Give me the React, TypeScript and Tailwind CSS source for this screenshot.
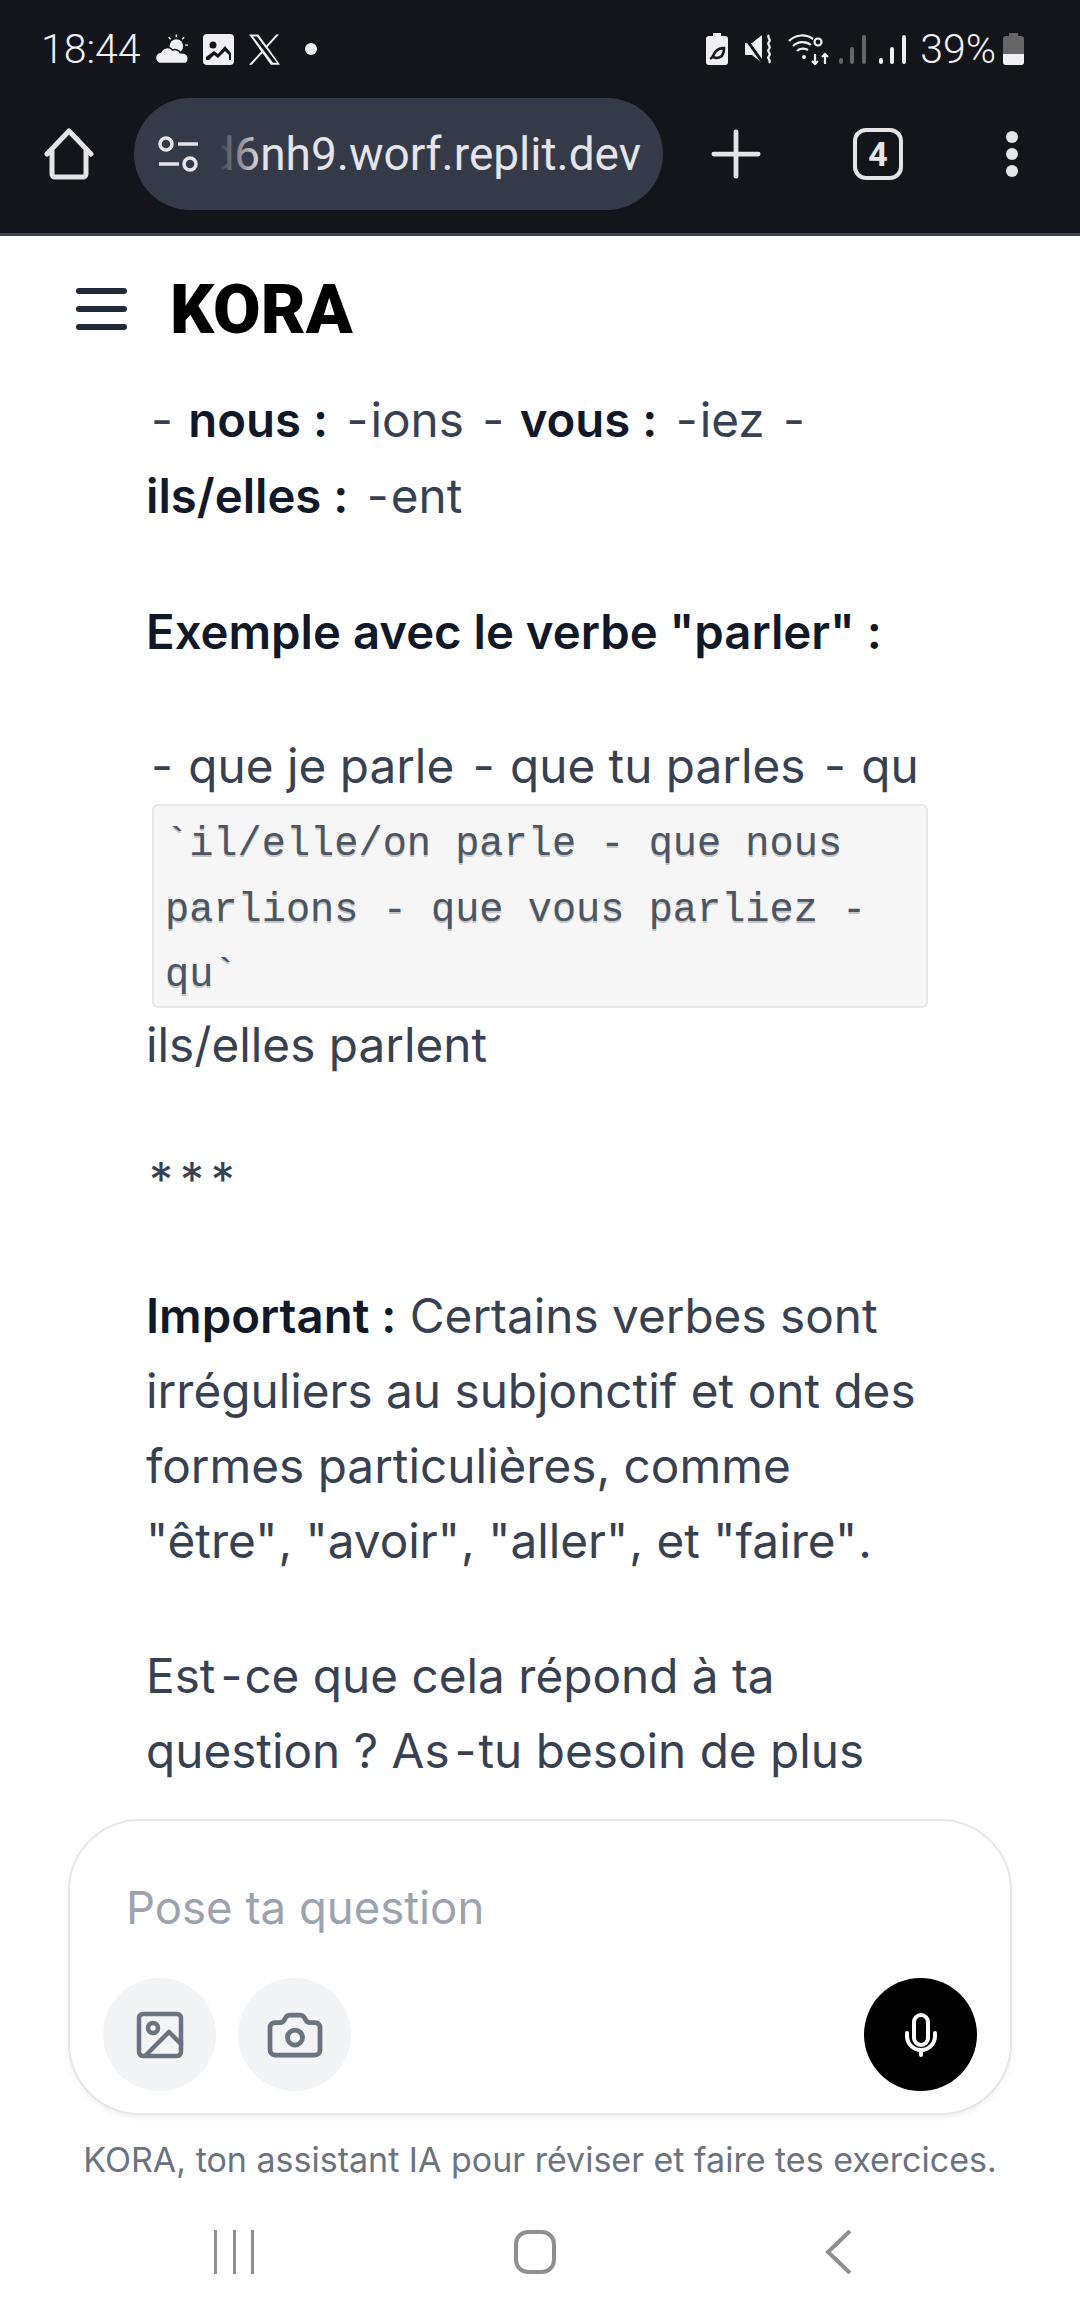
import { Camera, Plus } from "lucide-react";

const ink = "font-semibold text-[47.3px] text-[#111827]";

function Dash() {
  return <span className="ml-[5px] mr-[2px]">-</span>;
}

function Quoted({ word }: { word: string }) {
  return <span className="pr-[1px]">"{word}"</span>;
}

function StatusBar() {
  return (
    <div className="flex h-[78px] items-center justify-between pl-[41px] pr-[56px] pt-[20px] font-['Roboto',sans-serif] text-[41px] font-light leading-[50px] text-[#f0f0f2]">
      <div className="flex items-center">
        <span>18:44</span>
        <svg className="ml-[15px] h-[32px] w-[33px]" viewBox="0 0 34 32" fill="#f0f0f2">
          <circle cx="21" cy="13" r="7" />
          <path d="M6 31a6 6 0 0 1-1-12c2-5 9-6 12-2 3-1 7 0 8 3 6-1 9 3 8 7 0 3-2 4-4 4z" stroke="#13151a" strokeWidth="1.5" />
          <path d="M21 1v3M29 4l-2 2M33 12h-3M13 4l2 2" stroke="#f0f0f2" strokeWidth="1.5" />
        </svg>
        <svg className="ml-[14px] h-[31px] w-[31px]" viewBox="0 0 31 31">
          <rect width="31" height="31" rx="4" fill="#f0f0f2" />
          <circle cx="10" cy="11" r="3.5" fill="#13151a" />
          <path d="M3 26v-3l8-6 4 3 7-8 6 7v7z" fill="#13151a" />
          <path d="M6 26l5-5 4 3 7-7 4 4v5z" fill="#f0f0f2" />
        </svg>
        <svg className="ml-[14px] h-[33px] w-[33px]" viewBox="0 0 24 24" fill="#f0f0f2">
          <path d="M14.2 10.2 22.6 1h-2l-7.3 8L7.5 1H.8l8.8 12.4L.8 23h2l7.7-8.4 6.1 8.4h6.7zM3.6 2.5h2.9l14.6 19.1h-2.9z" />
        </svg>
        <span className="ml-[24px] h-[12px] w-[12px] rounded-full bg-[#f0f0f2]" />
      </div>
      <div className="flex items-center">
        <svg className="h-[32px] w-[22px]" viewBox="0 0 22 32">
          <path d="M7 0h8v3h4a3 3 0 0 1 3 3v23a3 3 0 0 1-3 3H3a3 3 0 0 1-3-3V6a3 3 0 0 1 3-3h4z" fill="#f0f0f2" />
          <path d="M4 26c4-2 3-5 6-8 2-2 6-3 8-3 0 6-2 10-8 10l-3-1" fill="none" stroke="#13151a" strokeWidth="2.5" />
        </svg>
        <svg className="ml-[16px] h-[30px] w-[29px]" viewBox="0 0 29 30" fill="#f0f0f2">
          <path d="M1 9h7l10-8v28l-10-8H1z" />
          <path d="M0 2l19 27" stroke="#13151a" strokeWidth="3" />
          <path d="M25 1c-3 3 3 4 0 7s3 4 0 7 3 4 0 7 3 4 0 7" fill="none" stroke="#f0f0f2" strokeWidth="2.2" />
        </svg>
        <svg className="ml-[15px] h-[32px] w-[42px]" viewBox="0 0 42 32" fill="none" stroke="#f0f0f2" strokeWidth="2.2">
          <path d="M1 8c7-7 17-7 24-2M5 13c5-5 13-5 18-1M9 18c3-3 8-3 11-1" />
          <circle cx="16" cy="24" r="2" fill="#f0f0f2" stroke="none" />
          <circle cx="30" cy="9" r="3.5" />
          <path d="M27 21v10M24 28l3 3 3-3M37 31v-10M34 24l3-3 3 3" />
        </svg>
        <svg className="ml-[9px] h-[30px] w-[27px]" viewBox="0 0 27 30" fill="#666">
          <rect x="0" y="24" width="4" height="6" rx="2" />
          <rect x="11" y="13" width="4" height="17" rx="2" />
          <rect x="23" y="1" width="4" height="29" rx="2" />
        </svg>
        <svg className="ml-[13px] h-[30px] w-[27px]" viewBox="0 0 27 30" fill="#f0f0f2">
          <rect x="0" y="24" width="4" height="6" rx="2" />
          <rect x="11" y="13" width="4" height="17" rx="2" />
          <rect x="23" y="1" width="4" height="29" rx="2" />
        </svg>
        <span className="ml-[14px]">39%</span>
        <svg className="ml-[7px] h-[32px] w-[21px]" viewBox="0 0 21 32">
          <path d="M6 0h9v3h3a3 3 0 0 1 3 3v23a3 3 0 0 1-3 3H3a3 3 0 0 1-3-3V6a3 3 0 0 1 3-3h3z" fill="#666" />
          <path d="M0 21h21v8a3 3 0 0 1-3 3H3a3 3 0 0 1-3-3z" fill="#f0f0f2" />
        </svg>
      </div>
    </div>
  );
}

function Toolbar() {
  return (
    <div className="flex h-[158px] items-center border-b-[3px] border-[#43454c] pb-[3px]">
      <svg className="ml-[44px] h-[52px] w-[50px] shrink-0" viewBox="0 0 50 52" fill="none" stroke="#e4e4e9" strokeWidth="5" strokeLinejoin="round" strokeLinecap="round">
        <path d="M3 26 25 3l22 23M8 23v23a3 3 0 0 0 3 3h28a3 3 0 0 0 3-3V23" />
      </svg>
      <div className="relative ml-[40px] flex h-[112px] w-[529px] shrink-0 items-center rounded-full bg-[#343a48] pl-[23px] pr-[22px]">
        <svg className="h-[36px] w-[42px] shrink-0" viewBox="0 0 42 36" fill="none" stroke="#e4e4e9" strokeWidth="3.5">
          <circle cx="9" cy="8" r="6" />
          <path d="M21 8h20M2 28h20" />
          <circle cx="33" cy="28" r="6" />
        </svg>
        <div className="ml-[22px] flex-1 overflow-hidden whitespace-nowrap text-right font-['Roboto',sans-serif] text-[46px] leading-[60px] text-[#e4e4e9] [direction:rtl]">
          <span className="[direction:ltr] [unicode-bidi:embed]">d6nh9.worf.replit.dev</span>
        </div>
        <div className="absolute left-[84px] top-0 h-full w-[44px] bg-gradient-to-r from-[#343a48] to-transparent" />
      </div>
      <Plus className="ml-[35px] h-[76px] w-[76px] shrink-0 text-[#e4e4e9]" strokeWidth={1.5} />
      <div className="ml-[79px] flex h-[52px] w-[50px] shrink-0 items-center justify-center rounded-[13px] border-[4px] border-[#e4e4e9] font-['Roboto',sans-serif] text-[34px] font-bold text-[#e4e4e9]">
        4
      </div>
      <div className="ml-[103px] flex flex-col gap-[5px]">
        <span className="h-[12px] w-[12px] rounded-full bg-[#e4e4e9]" />
        <span className="h-[12px] w-[12px] rounded-full bg-[#e4e4e9]" />
        <span className="h-[12px] w-[12px] rounded-full bg-[#e4e4e9]" />
      </div>
    </div>
  );
}

function Composer() {
  return (
    <div className="mx-[68px] flex h-[296px] w-[944px] shrink-0 flex-col rounded-[72px] border-2 border-[#e5e7eb] bg-white px-[33px] pb-[22px] pt-[57px] shadow-[0_3px_6px_rgba(0,0,0,0.06)]">
      <div className="pl-[23px] text-[45.5px] leading-[60px] text-[#9ca3af]">Pose ta question</div>
      <div className="mt-auto flex items-center">
        <div className="flex h-[113px] w-[113px] items-center justify-center rounded-full bg-[#f3f4f6]">
          <svg className="h-[48px] w-[48px]" viewBox="0 0 48 48" fill="none" stroke="#6b7280" strokeWidth="4.5" strokeLinecap="round" strokeLinejoin="round">
            <rect x="3" y="3" width="42" height="42" rx="4" />
            <circle cx="17" cy="17" r="5" />
            <path d="M10 44 33 21l12 12" />
          </svg>
        </div>
        <div className="ml-[22px] flex h-[113px] w-[113px] items-center justify-center rounded-full bg-[#f3f4f6]">
          <Camera className="h-[60px] w-[60px] text-[#6b7280]" strokeWidth={1.9} />
        </div>
        <div className="ml-auto flex h-[113px] w-[113px] items-center justify-center rounded-full bg-black">
          <svg className="h-[44px] w-[34px]" viewBox="0 0 34 44" fill="none" stroke="#fff" strokeWidth="4" strokeLinecap="round">
            <rect x="10" y="2" width="14" height="30" rx="7" />
            <path d="M3 20v3a14 14 0 0 0 28 0v-3M17 37v5" />
          </svg>
        </div>
      </div>
    </div>
  );
}

export default function App() {
  return (
    <div className="flex h-[2316px] w-[1080px] flex-col overflow-hidden bg-white font-['Inter',sans-serif]">
      <div className="bg-[#13151a]">
        <StatusBar />
        <Toolbar />
      </div>

      <div className="flex h-[146px] shrink-0 items-center pl-[76px]">
        <div className="flex w-[51px] flex-col gap-[12px]">
          <span className="h-[6px] rounded-full bg-[#1f2937]" />
          <span className="h-[6px] rounded-full bg-[#1f2937]" />
          <span className="h-[6px] rounded-full bg-[#1f2937]" />
        </div>
        <span className="ml-[43px] font-['Roboto',sans-serif] text-[69px] font-black leading-none text-black">KORA</span>
      </div>

      <main className="min-h-0 flex-1 overflow-hidden pl-[146px] pr-[150px] text-[47.7px] leading-[75px] text-[#374151]">
        <p className="mb-[60px]">
          <Dash /> <span className={ink}>nous :</span> <Dash />ions <Dash /> <span className={ink}>vous :</span> <Dash />iez <Dash />{" "}
          <span className={ink}>ils/elles :</span> <Dash />ent
        </p>
        <p className={`mb-[60px] ${ink}`}>Exemple avec le verbe "parler" :</p>
        <p>
          <Dash /> que je parle <Dash /> que tu parles <Dash /> qu
        </p>
        <code className="ml-[6px] block h-[204px] w-[776px] rounded-[6px] border-2 border-[#e5e7eb] bg-[#f6f6f6] px-[11px] pt-[6px] font-['Liberation_Mono',monospace] text-[40.3px] leading-[65.5px] text-[#4b5563] [text-shadow:0_2px_0_#c4c4c4]">
          `il/elle/on parle - que nous parlions - que vous parliez - qu`
        </code>
        <p className="mb-[60px]">ils/elles parlent</p>
        <p className="mb-[60px] pl-[3px] tracking-[7px]">***</p>
        <p className="mb-[60px]">
          <span className={ink}>Important :</span> Certains verbes sont irréguliers au subjonctif et ont des formes particulières, comme{" "}
          <Quoted word="être" />, <Quoted word="avoir" />, <Quoted word="aller" />, et <Quoted word="faire" />.
        </p>
        <p>
          Est<Dash />ce que cela répond à ta question ? As<Dash />tu besoin de plus
        </p>
      </main>

      <Composer />
      <p className="mt-[25px] text-center text-[34px] leading-[40px] text-[#6b7280]">KORA, ton assistant IA pour réviser et faire tes exercices.</p>
      <div className="mt-[50px] flex h-[86px] shrink-0 items-start pl-[214px]">
        <div className="flex h-[44px] w-[40px] justify-between">
          <span className="w-[3px] bg-[#8f8f8f]" />
          <span className="w-[3px] bg-[#8f8f8f]" />
          <span className="w-[3px] bg-[#8f8f8f]" />
        </div>
        <div className="ml-[260px] h-[44px] w-[42px] rounded-[14px] border-[4px] border-[#8f8f8f]" />
        <svg className="ml-[269px] h-[44px] w-[27px]" viewBox="0 0 27 44" fill="none" stroke="#8f8f8f" strokeWidth="4">
          <path d="M25 1 3 22l22 21" />
        </svg>
      </div>
    </div>
  );
}
